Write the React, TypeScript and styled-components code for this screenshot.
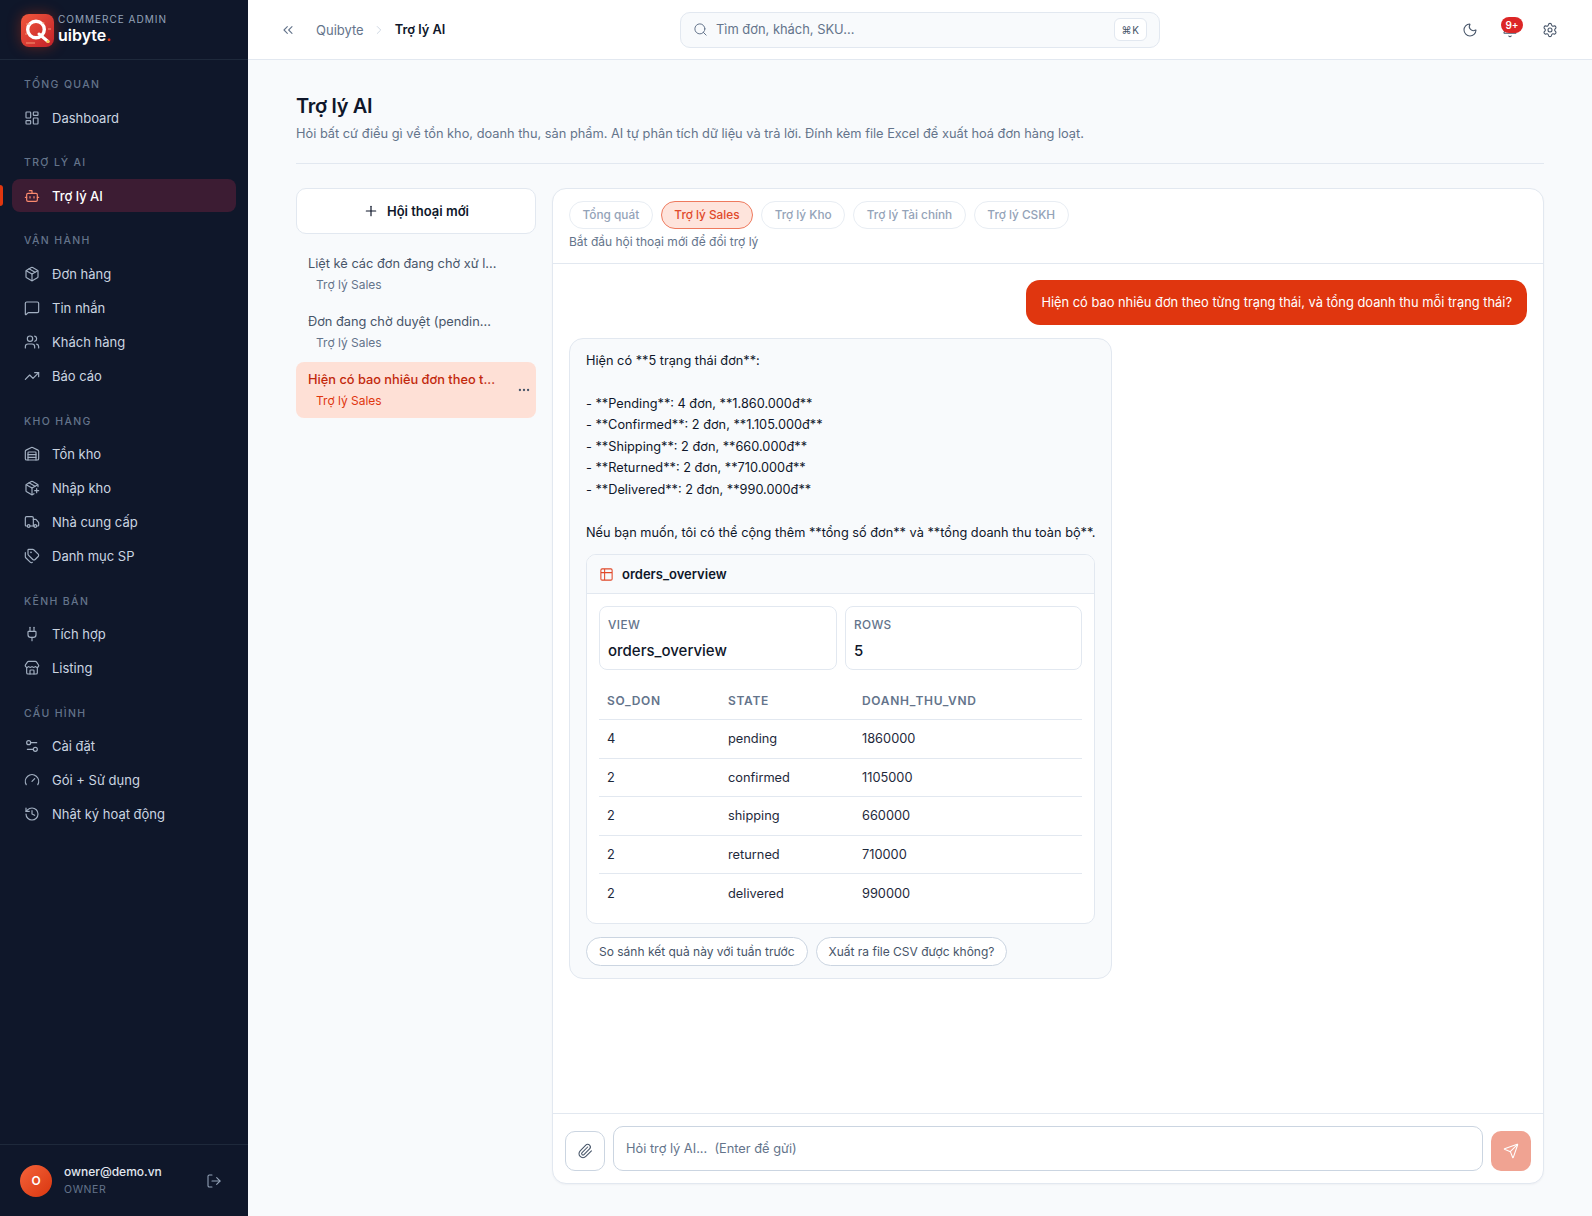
import type { ReactNode } from "react"
import styled, { createGlobalStyle } from "styled-components"
import {
  Bell,
  Bot,
  ChevronRight,
  ChevronsLeft,
  Ellipsis,
  Gauge,
  History,
  LayoutDashboard,
  LogOut,
  MessageSquare,
  Moon,
  Package,
  PackagePlus,
  Paperclip,
  Plug,
  Plus,
  Search,
  Send,
  Settings,
  Settings2,
  Store,
  Table2,
  Tags,
  TrendingUp,
  Truck,
  Users,
  Warehouse,
} from "lucide-react"

const GlobalStyle = createGlobalStyle`
  * { box-sizing: border-box; }
  body {
    margin: 0;
    font-family: Inter, "Noto Sans", sans-serif;
    color: #0f172a;
    background: #f8fafc;
  }
`

const Shell = styled.div`
  display: grid;
  grid-template-columns: 248px 1fr;
  height: 1216px;
  overflow: hidden;
`

const Sidebar = styled.aside`
  display: flex;
  flex-direction: column;
  background: #0f172a;
`

const Brand = styled.div`
  display: flex;
  align-items: center;
  gap: 4px;
  height: 60px;
  padding: 0 0 0 21px;
  border-bottom: 1px solid #1e293b;
`

const LogoBox = styled.div`
  width: 33px;
  height: 33px;
  flex: none;
  border-radius: 8px;
  box-shadow: 0 0 14px rgba(224, 54, 15, 0.4);
  margin-top: 1px;
`

const BrandText = styled.div`
  display: flex;
  flex-direction: column;
  margin-top: -1px;
`

const BrandSub = styled.span`
  font-size: 10px;
  line-height: 13px;
  letter-spacing: 1px;
  color: #94a3b8;
`

const BrandName = styled.span`
  font-size: 16px;
  line-height: 19px;
  font-weight: 600;
  color: #fff;
  b {
    color: #e0360f;
    font-weight: 600;
  }
`

const Nav = styled.nav`
  flex: 1;
  padding-top: 16px;
  display: flex;
  flex-direction: column;
  gap: 20.2px;
`

const SectionBlock = styled.div`
  display: flex;
  flex-direction: column;
  gap: 1px;
`

const SectionTitle = styled.div`
  height: 17px;
  line-height: 17px;
  padding-left: 24px;
  margin-bottom: 7px;
  font-size: 10.5px;
  font-weight: 500;
  letter-spacing: 1.35px;
  color: #64748b;
`

const NavRow = styled.div<{ $active?: boolean }>`
  position: relative;
  display: flex;
  align-items: center;
  gap: 12px;
  height: 33px;
  margin: 0 12px;
  padding: 0 12px;
  border-radius: 8px;
  font-size: 13px;
  font-weight: ${(p) => (p.$active ? 500 : 400)};
  color: ${(p) => (p.$active ? "#fff" : "#cbd5e1")};
  background: ${(p) => (p.$active ? "#3c1c33" : "transparent")};
  svg {
    flex: none;
    color: ${(p) => (p.$active ? "#fb8a6e" : "#a3b0c2")};
  }
`

const ActiveMark = styled.span`
  position: absolute;
  left: -12px;
  top: 6px;
  width: 3px;
  height: 21px;
  border-radius: 0 3px 3px 0;
  background: #e0360f;
`

const UserFooter = styled.div`
  display: flex;
  align-items: center;
  height: 72px;
  padding: 0 20px;
  border-top: 1px solid #1e293b;
`

const Avatar = styled.div`
  display: grid;
  place-items: center;
  width: 32px;
  height: 32px;
  border-radius: 50%;
  background: linear-gradient(135deg, #f4633a, #d9360f);
  color: #fff;
  font-size: 12px;
  font-weight: 600;
`

const UserMeta = styled.div`
  flex: 1;
  display: flex;
  flex-direction: column;
  gap: 4px;
  margin-left: 12px;
`

const UserMail = styled.span`
  font-size: 12px;
  line-height: 15px;
  font-weight: 500;
  color: #e2e8f0;
`

const UserRole = styled.span`
  font-size: 10.5px;
  line-height: 14px;
  letter-spacing: 0.6px;
  color: #64748b;
`

const LogoutIcon = styled(LogOut)`
  color: #94a3b8;
  margin-right: 6px;
`

const Main = styled.main`
  display: flex;
  flex-direction: column;
  min-width: 0;
`

const Topbar = styled.header`
  display: grid;
  grid-template-columns: 1fr 480px 1fr;
  align-items: center;
  height: 60px;
  padding: 0 32px;
  background: #fff;
  border-bottom: 1px solid #e2e8f0;
`

const Crumbs = styled.div`
  display: flex;
  align-items: center;
  font-size: 13px;
  color: #64748b;
  svg {
    color: #64748b;
  }
`

const CollapseIcon = styled(ChevronsLeft)`
  margin-right: 20px;
`

const CrumbArrow = styled(ChevronRight)`
  margin: 0 8.5px;
  color: #cbd5e1 !important;
`

const CrumbNow = styled.span`
  font-weight: 600;
  font-size: 12.8px;
  color: #0f172a;
`

const SearchBox = styled.div`
  display: flex;
  align-items: center;
  gap: 8px;
  height: 36px;
  padding: 0 12px;
  border: 1px solid #e2e8f0;
  border-radius: 10px;
  background: #f8fafc;
  font-size: 12.9px;
  color: #64748b;
  svg {
    flex: none;
  }
`

const SearchHint = styled.span`
  flex: 1;
`

const Kbd = styled.span`
  display: grid;
  place-items: center;
  width: 33px;
  height: 23px;
  border: 1px solid #e2e8f0;
  border-radius: 6px;
  background: #fff;
  font-size: 10px;
  letter-spacing: 0.6px;
  color: #475569;
`

const TopActions = styled.div`
  display: flex;
  justify-content: flex-end;
  align-items: center;
  gap: 24px;
  padding-right: 2px;
  color: #475569;
`

const BellWrap = styled.div`
  position: relative;
  display: flex;
`

const Badge = styled.span`
  position: absolute;
  top: -5px;
  left: -1px;
  display: grid;
  place-items: center;
  width: 22px;
  height: 16px;
  border-radius: 8px;
  background: #dc2626;
  color: #fff;
  font-size: 10px;
  font-weight: 600;
`

const Content = styled.div`
  flex: 1;
  display: flex;
  flex-direction: column;
  min-height: 0;
  padding: 32px 48px 32px;
`

const PageTitle = styled.h1`
  margin: 0;
  font-size: 20px;
  line-height: 28px;
  font-weight: 600;
  letter-spacing: -0.3px;
`

const PageDesc = styled.p`
  margin: 5px 0 0;
  font-size: 12.8px;
  line-height: 18px;
  color: #64748b;
`

const Divider = styled.hr`
  width: 100%;
  margin: 20px 0 24px;
  border: 0;
  border-top: 1px solid #e2e8f0;
`

const Columns = styled.div`
  flex: 1;
  display: grid;
  grid-template-columns: 240px 1fr;
  gap: 16px;
  min-height: 0;
`

const ThreadColumn = styled.div`
  display: flex;
  flex-direction: column;
  gap: 2px;
`

const NewThread = styled.button`
  display: flex;
  align-items: center;
  justify-content: center;
  gap: 8px;
  height: 46px;
  margin-bottom: 10px;
  border: 1px solid #e2e8f0;
  border-radius: 10px;
  background: #fff;
  font: 600 13px Inter, sans-serif;
  color: #0f172a;
`

const Thread = styled.div<{ $active?: boolean }>`
  position: relative;
  display: flex;
  flex-direction: column;
  justify-content: center;
  gap: 3.5px;
  height: 56px;
  padding: 0 12px;
  border-radius: 8px;
  font-weight: ${(p) => (p.$active ? 500 : 400)};
  background: ${(p) => (p.$active ? "#fee0d6" : "transparent")};
  color: ${(p) => (p.$active ? "#c2280c" : "#475569")};
`

const ThreadTitle = styled.span`
  max-width: 190px;
  font-size: 12.8px;
  line-height: 18px;
  white-space: nowrap;
  overflow: hidden;
`

const ThreadSub = styled.span<{ $active?: boolean }>`
  padding-left: 8px;
  font-size: 12px;
  font-weight: 400;
  line-height: 16px;
  color: ${(p) => (p.$active ? "#e0360f" : "#64748b")};
`

const ThreadDots = styled(Ellipsis)`
  position: absolute;
  right: 5px;
  top: 21px;
  color: #475569;
`

const ChatPanel = styled.section`
  display: flex;
  flex-direction: column;
  min-height: 0;
  border: 1px solid #e2e8f0;
  border-radius: 14px;
  background: #fff;
  box-shadow: 0 1px 2px rgba(15, 23, 42, 0.04);
`

const ChatHead = styled.div`
  padding: 12px 16px 13px;
  border-bottom: 1px solid #e2e8f0;
`

const Tabs = styled.div`
  display: flex;
  gap: 8px;
`

const Tab = styled.span<{ $active?: boolean }>`
  display: grid;
  place-items: center;
  height: 28px;
  padding: 0 12.6px;
  border-radius: 14px;
  border: 1px solid ${(p) => (p.$active ? "#ee7a5e" : "#e8edf3")};
  background: ${(p) => (p.$active ? "#fee4dc" : "#fff")};
  color: ${(p) => (p.$active ? "#e0492a" : "#94a3b8")};
  font-size: 11.8px;
  font-weight: 500;
`

const TabNote = styled.div`
  margin-top: 5px;
  font-size: 12px;
  line-height: 16px;
  color: #64748b;
`

const Messages = styled.div`
  flex: 1;
  display: flex;
  flex-direction: column;
  align-items: flex-start;
  gap: 13px;
  min-height: 0;
  padding: 16px;
`

const UserBubble = styled.div`
  align-self: flex-end;
  padding: 0 15px;
  height: 45px;
  line-height: 45px;
  border-radius: 14px;
  background: #e0360f;
  color: #fff;
  font-size: 12.87px;
`

const BotBubble = styled.div`
  width: 543px;
  padding: 11px 16px 12px;
  border: 1px solid #e2e8f0;
  border-radius: 14px;
  background: #f8fafc;
`

const BotText = styled.p`
  margin: 0;
  font-size: 12.75px;
  line-height: 21.45px;
  white-space: pre;
  color: #0f172a;
`

const ResultCard = styled.div`
  margin-top: 11px;
  border: 1px solid #e2e8f0;
  border-radius: 10px;
  background: #fff;
  overflow: hidden;
`

const ResultHead = styled.div`
  display: flex;
  align-items: center;
  gap: 8px;
  height: 39px;
  padding: 0 12px;
  border-bottom: 1px solid #e2e8f0;
  background: #f8fafc;
  font-size: 13px;
  font-weight: 600;
  svg {
    color: #e0492a;
  }
`

const ResultBody = styled.div`
  padding: 12px 12px 11px;
`

const Stats = styled.div`
  display: grid;
  grid-template-columns: 238px 1fr;
  gap: 8px;
`

const Stat = styled.div`
  height: 64px;
  padding: 10px 8px;
  border: 1px solid #e2e8f0;
  border-radius: 8px;
`

const StatLabel = styled.div`
  font-size: 11.8px;
  line-height: 16px;
  font-weight: 500;
  letter-spacing: 0.4px;
  color: #64748b;
`

const StatValue = styled.div`
  margin-top: 8px;
  font-size: 15px;
  line-height: 20px;
  font-weight: 500;
`

const DataTable = styled.table`
  width: 100%;
  margin-top: 12.5px;
  border-collapse: collapse;
  table-layout: fixed;
  font-size: 12.8px;
  th {
    height: 37px;
    padding: 0 8px;
    text-align: left;
    font-size: 12px;
    font-weight: 600;
    letter-spacing: 0.7px;
    color: #64748b;
    border-bottom: 1px solid #e2e8f0;
  }
  td {
    height: 38.5px;
    padding: 0 8px;
    color: #1e293b;
    border-bottom: 1px solid #e2e8f0;
  }
  tr:last-child td {
    border-bottom: 0;
  }
`

const Chips = styled.div`
  display: flex;
  gap: 8px;
  margin-top: 13px;
`

const Chip = styled.span`
  display: grid;
  place-items: center;
  height: 29px;
  padding: 0 12px;
  border: 1px solid #cbd5e1;
  border-radius: 15px;
  background: #fff;
  font-size: 12px;
  color: #475569;
`

const Composer = styled.div`
  display: flex;
  align-items: flex-end;
  gap: 8px;
  padding: 12px;
  border-top: 1px solid #e2e8f0;
`

const AttachButton = styled.button`
  display: grid;
  place-items: center;
  width: 40px;
  height: 40px;
  flex: none;
  padding: 0;
  border: 1px solid #cbd5e1;
  border-radius: 10px;
  background: #fff;
  color: #475569;
`

const Prompt = styled.div`
  flex: 1;
  height: 45px;
  padding: 0 12px;
  line-height: 43px;
  border: 1px solid #cbd5e1;
  border-radius: 10px;
  font-size: 12.8px;
  white-space: pre;
  color: #64748b;
`

const SendButton = styled.button`
  display: grid;
  place-items: center;
  width: 40px;
  height: 40px;
  flex: none;
  padding: 0;
  border: 0;
  border-radius: 10px;
  background: #f0a392;
  color: #fff;
`

const Logo = () => (
  <LogoBox>
    <svg width="33" height="33" viewBox="0 0 33 33">
      <defs>
        <linearGradient id="logo-fill" x1="0" y1="0" x2="1" y2="1">
          <stop offset="0" stopColor="#f2583c" />
          <stop offset="1" stopColor="#c22129" />
        </linearGradient>
      </defs>
      <rect width="33" height="33" rx="8" fill="url(#logo-fill)" />
      <circle cx="15" cy="15.5" r="8.3" fill="none" stroke="#fff" strokeWidth="3.4" />
      <path d="M18 20 27 27.5" stroke="#fff" strokeWidth="3" strokeLinecap="round" />
      <circle cx="27" cy="27.5" r="1.6" fill="#f9c74f" />
      <path d="M5 29h9M5 10h4M21 9h2.5M27 15h3M4 20h2" stroke="#f9a27e" strokeWidth="0.9" />
    </svg>
  </LogoBox>
)

type NavEntry = { icon: ReactNode; label: string; active?: boolean }

const icon = { size: 16, strokeWidth: 1.75 }

const navSections: { title: string; items: NavEntry[] }[] = [
  { title: "TỔNG QUAN", items: [{ icon: <LayoutDashboard {...icon} />, label: "Dashboard" }] },
  { title: "TRỢ LÝ AI", items: [{ icon: <Bot {...icon} />, label: "Trợ lý AI", active: true }] },
  {
    title: "VẬN HÀNH",
    items: [
      { icon: <Package {...icon} />, label: "Đơn hàng" },
      { icon: <MessageSquare {...icon} />, label: "Tin nhắn" },
      { icon: <Users {...icon} />, label: "Khách hàng" },
      { icon: <TrendingUp {...icon} />, label: "Báo cáo" },
    ],
  },
  {
    title: "KHO HÀNG",
    items: [
      { icon: <Warehouse {...icon} />, label: "Tồn kho" },
      { icon: <PackagePlus {...icon} />, label: "Nhập kho" },
      { icon: <Truck {...icon} />, label: "Nhà cung cấp" },
      { icon: <Tags {...icon} />, label: "Danh mục SP" },
    ],
  },
  {
    title: "KÊNH BÁN",
    items: [
      { icon: <Plug {...icon} />, label: "Tích hợp" },
      { icon: <Store {...icon} />, label: "Listing" },
    ],
  },
  {
    title: "CẤU HÌNH",
    items: [
      { icon: <Settings2 {...icon} />, label: "Cài đặt" },
      { icon: <Gauge {...icon} />, label: "Gói + Sử dụng" },
      { icon: <History {...icon} />, label: "Nhật ký hoạt động" },
    ],
  },
]

const threads = [
  { title: "Liệt kê các đơn đang chờ xử l..." },
  { title: "Đơn đang chờ duyệt (pendin..." },
  { title: "Hiện có bao nhiêu đơn theo t...", active: true },
]

const agentTabs = ["Tổng quát", "Trợ lý Sales", "Trợ lý Kho", "Trợ lý Tài chính", "Trợ lý CSKH"]

const answer = `Hiện có **5 trạng thái đơn**:

- **Pending**: 4 đơn, **1.860.000đ**
- **Confirmed**: 2 đơn, **1.105.000đ**
- **Shipping**: 2 đơn, **660.000đ**
- **Returned**: 2 đơn, **710.000đ**
- **Delivered**: 2 đơn, **990.000đ**

Nếu bạn muốn, tôi có thể cộng thêm **tổng số đơn** và **tổng doanh thu toàn bộ**.`

const rows = [
  [4, "pending", 1860000],
  [2, "confirmed", 1105000],
  [2, "shipping", 660000],
  [2, "returned", 710000],
  [2, "delivered", 990000],
]

const App = () => (
  <Shell>
    <GlobalStyle />
    <Sidebar>
      <Brand>
        <Logo />
        <BrandText>
          <BrandSub>COMMERCE ADMIN</BrandSub>
          <BrandName>
            uibyte<b>.</b>
          </BrandName>
        </BrandText>
      </Brand>
      <Nav>
        {navSections.map((section) => (
          <SectionBlock key={section.title}>
            <SectionTitle>{section.title}</SectionTitle>
            {section.items.map((item) => (
              <NavRow key={item.label} $active={item.active}>
                {item.active && <ActiveMark />}
                {item.icon}
                {item.label}
              </NavRow>
            ))}
          </SectionBlock>
        ))}
      </Nav>
      <UserFooter>
        <Avatar>O</Avatar>
        <UserMeta>
          <UserMail>owner@demo.vn</UserMail>
          <UserRole>OWNER</UserRole>
        </UserMeta>
        <LogoutIcon size={16} strokeWidth={1.6} />
      </UserFooter>
    </Sidebar>
    <Main>
      <Topbar>
        <Crumbs>
          <CollapseIcon size={16} strokeWidth={1.6} />
          Quibyte
          <CrumbArrow size={14} strokeWidth={1.6} />
          <CrumbNow>Trợ lý AI</CrumbNow>
        </Crumbs>
        <SearchBox>
          <Search size={15} strokeWidth={1.6} />
          <SearchHint>Tìm đơn, khách, SKU...</SearchHint>
          <Kbd>⌘K</Kbd>
        </SearchBox>
        <TopActions>
          <Moon size={16} strokeWidth={1.6} />
          <BellWrap>
            <Bell size={16} strokeWidth={1.6} />
            <Badge>9+</Badge>
          </BellWrap>
          <Settings size={16} strokeWidth={1.6} />
        </TopActions>
      </Topbar>
      <Content>
        <PageTitle>Trợ lý AI</PageTitle>
        <PageDesc>
          Hỏi bất cứ điều gì về tồn kho, doanh thu, sản phẩm. AI tự phân tích dữ liệu và trả lời.
          Đính kèm file Excel để xuất hoá đơn hàng loạt.
        </PageDesc>
        <Divider />
        <Columns>
          <ThreadColumn>
            <NewThread>
              <Plus size={16} strokeWidth={1.8} />
              Hội thoại mới
            </NewThread>
            {threads.map((thread) => (
              <Thread key={thread.title} $active={thread.active}>
                <ThreadTitle>{thread.title}</ThreadTitle>
                <ThreadSub $active={thread.active}>Trợ lý Sales</ThreadSub>
                {thread.active && <ThreadDots size={14} />}
              </Thread>
            ))}
          </ThreadColumn>
          <ChatPanel>
            <ChatHead>
              <Tabs>
                {agentTabs.map((tab) => (
                  <Tab key={tab} $active={tab === "Trợ lý Sales"}>
                    {tab}
                  </Tab>
                ))}
              </Tabs>
              <TabNote>Bắt đầu hội thoại mới để đổi trợ lý</TabNote>
            </ChatHead>
            <Messages>
              <UserBubble>Hiện có bao nhiêu đơn theo từng trạng thái, và tổng doanh thu mỗi trạng thái?</UserBubble>
              <BotBubble>
                <BotText>{answer}</BotText>
                <ResultCard>
                  <ResultHead>
                    <Table2 size={15} strokeWidth={1.7} />
                    orders_overview
                  </ResultHead>
                  <ResultBody>
                    <Stats>
                      <Stat>
                        <StatLabel>VIEW</StatLabel>
                        <StatValue>orders_overview</StatValue>
                      </Stat>
                      <Stat>
                        <StatLabel>ROWS</StatLabel>
                        <StatValue>5</StatValue>
                      </Stat>
                    </Stats>
                    <DataTable>
                      <colgroup>
                        <col width="121" />
                        <col width="134" />
                        <col />
                      </colgroup>
                      <thead>
                        <tr>
                          <th>SO_DON</th>
                          <th>STATE</th>
                          <th>DOANH_THU_VND</th>
                        </tr>
                      </thead>
                      <tbody>
                        {rows.map((row) => (
                          <tr key={row[1]}>
                            <td>{row[0]}</td>
                            <td>{row[1]}</td>
                            <td>{row[2]}</td>
                          </tr>
                        ))}
                      </tbody>
                    </DataTable>
                  </ResultBody>
                </ResultCard>
                <Chips>
                  <Chip>So sánh kết quả này với tuần trước</Chip>
                  <Chip>Xuất ra file CSV được không?</Chip>
                </Chips>
              </BotBubble>
            </Messages>
            <Composer>
              <AttachButton>
                <Paperclip size={16} strokeWidth={1.6} />
              </AttachButton>
              <Prompt>Hỏi trợ lý AI...  (Enter để gửi)</Prompt>
              <SendButton>
                <Send size={16} strokeWidth={1.6} />
              </SendButton>
            </Composer>
          </ChatPanel>
        </Columns>
      </Content>
    </Main>
  </Shell>
)

export default App
